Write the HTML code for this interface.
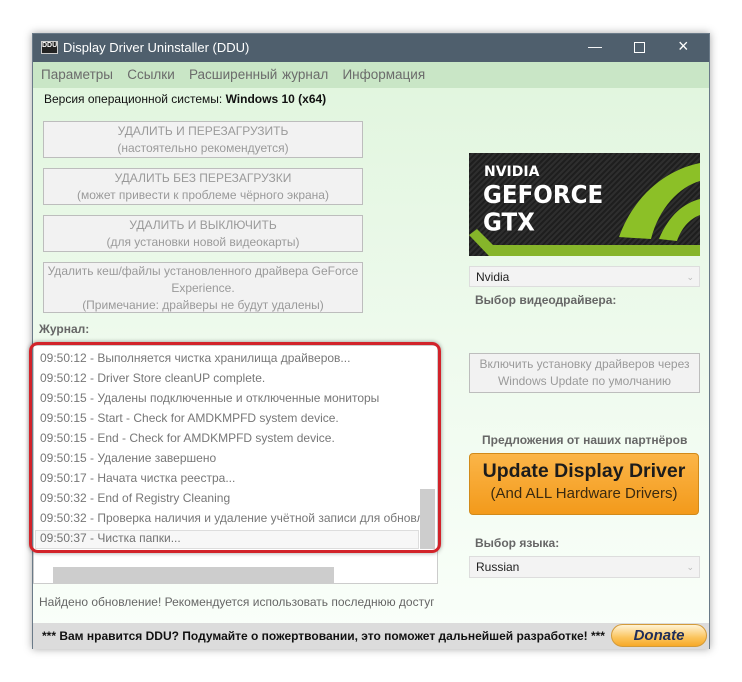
<!DOCTYPE html>
<html><head><meta charset="utf-8"><style>
*{box-sizing:border-box;margin:0;padding:0}
body{width:742px;height:682px;background:#fff;font-family:"Liberation Sans","DejaVu Sans",sans-serif;position:relative;overflow:hidden}
.a{position:absolute}
.win{left:32px;top:33px;width:678px;height:616px;border:1px solid #6a7a88;background:linear-gradient(#dff5dc,#eefaed 50%,#fafffa);box-shadow:0 0 8px rgba(0,0,0,.35)}
.title{left:0;top:0;width:676px;height:28px;background:#4f5f6d;color:#fff;font-size:13px}
.btn{background:#f2f2f2;border:1px solid #bdbdbd;color:#9a9a9a;font-size:12px;text-align:center;line-height:17px}
.log{font-size:12px;color:#777;line-height:20px}
.combo{background:#f3f3f3;border:1px solid #ddd;font-size:12px;color:#222;padding-left:6px;line-height:20px}
.lbl{font-size:12px;font-weight:bold;color:#666}
</style></head><body>
<div class="a win">
 <div class="a title">
  <div class="a" style="left:8px;top:7px;width:17px;height:13px;background:#222;border:1px solid #ccc;font-size:7px;color:#fff;line-height:8px;text-align:center;font-weight:bold">DDU</div>
  <div class="a" style="left:30px;top:6px">Display Driver Uninstaller (DDU)</div>
  <div class="a" style="left:555px;top:4px;font-size:14px">&#8212;</div>
  <div class="a" style="left:601px;top:8px;width:11px;height:11px;border:1px solid #fff"></div>
  <div class="a" style="left:645px;top:2px;font-size:18px">&#215;</div>
 </div>
 <div class="a" style="left:0;top:28px;width:676px;height:26px;background:#c9e6c6;font-size:13.5px;color:#6b6b6b;line-height:26px;padding-left:8px;word-spacing:1px">Параметры&nbsp;&nbsp; Ссылки&nbsp;&nbsp; Расширенный журнал&nbsp;&nbsp; Информация</div>
 <div class="a" style="left:11px;top:58px;font-size:12px;color:#111">Версия операционной системы: <b>Windows 10 (x64)</b></div>
 <div class="a btn" style="left:10px;top:87px;width:320px;height:37px;padding-top:1px">УДАЛИТЬ И ПЕРЕЗАГРУЗИТЬ<br>(настоятельно рекомендуется)</div>
 <div class="a btn" style="left:10px;top:134px;width:320px;height:37px;padding-top:1px">УДАЛИТЬ БЕЗ ПЕРЕЗАГРУЗКИ<br>(может привести к проблеме чёрного экрана)</div>
 <div class="a btn" style="left:10px;top:181px;width:320px;height:37px;padding-top:1px">УДАЛИТЬ И ВЫКЛЮЧИТЬ<br>(для установки новой видеокарты)</div>
 <div class="a btn" style="left:10px;top:228px;width:320px;height:51px;padding-top:0px">Удалить кеш/файлы установленного драйвера GeForce<br>Experience.<br>(Примечание: драйверы не будут удалены)</div>
 <div class="a lbl" style="left:6px;top:288px">Журнал:</div>
 <div class="a" style="left:0;top:311px;width:405px;height:239px;background:#fff;border:1px solid #ccc"></div>
 <div class="a log" style="left:7px;top:314px;width:380px;white-space:nowrap;overflow:hidden">
 09:50:12 - Выполняется чистка хранилища драйверов...<br>09:50:12 - Driver Store cleanUP complete.<br>09:50:15 - Удалены подключенные и отключенные мониторы<br>09:50:15 - Start - Check for AMDKMPFD system device.<br>09:50:15 - End - Check for AMDKMPFD system device.<br>09:50:15 - Удаление завершено<br>09:50:17 - Начата чистка реестра...<br>09:50:32 - End of Registry Cleaning<br>09:50:32 - Проверка наличия и удаление учётной записи для обновл<br>09:50:37 - Чистка папки...</div>
 <div class="a" style="left:2px;top:496px;width:384px;height:19px;border:1px solid #ddd;background:rgba(0,0,0,.03)"></div>
 <div class="a" style="left:387px;top:455px;width:15px;height:60px;background:#cdcdcd"></div>
 <div class="a" style="left:-4px;top:308px;width:412px;height:211px;border:3px solid #d2232a;border-radius:9px;box-shadow:0 0 4px rgba(0,0,0,.4)"></div>
 <div class="a" style="left:20px;top:533px;width:281px;height:17px;background:#cdcdcd"></div>
 <div class="a" style="left:6px;top:561px;font-size:12px;color:#666;width:395px;white-space:nowrap;overflow:hidden">Найдено обновление! Рекомендуется использовать последнюю доступную</div>
 <div class="a" style="left:436px;top:119px;width:231px;height:103px;background:repeating-linear-gradient(135deg,#1e1e1e 0 2px,#2e2e2e 2px 4px);overflow:hidden">
  <svg width="231" height="103" style="position:absolute;left:0;top:0"><path d="M0 82 L20 103 L231 103 L231 92 L24 92 L8 76Z" fill="#86b52a"/><path d="M150 84 C168 35 205 15 231 10 L231 28 C210 34 190 55 182 86Z" fill="#8cc027"/><path d="M190 86 C200 62 215 50 231 46 L231 62 C220 66 212 76 208 88Z" fill="#8cc027"/></svg>
  <div class="a" style="left:15px;top:11px;color:#fff;font-weight:bold;font-size:14px;font-family:'DejaVu Sans',sans-serif">NVIDIA</div>
  <div class="a" style="left:14px;top:29px;color:#fff;font-weight:bold;font-size:23px;line-height:25px;font-family:'DejaVu Sans',sans-serif;transform:scaleY(1.1);transform-origin:0 0">GEFORCE<br>GTX</div>
 </div>
 <div class="a combo" style="left:436px;top:232px;width:231px;height:21px">Nvidia<span style="float:right;color:#bbb;margin-right:5px;font-size:9px">&#8964;</span></div>
 <div class="a lbl" style="left:442px;top:259px">Выбор видеодрайвера:</div>
 <div class="a btn" style="left:436px;top:319px;width:231px;height:40px;padding-top:2px">Включить установку драйверов через<br>Windows Update по умолчанию</div>
 <div class="a lbl" style="left:449px;top:399px">Предложения от наших партнёров</div>
 <div class="a" style="left:436px;top:419px;width:230px;height:62px;border:1px solid #d18a1a;border-radius:4px;background:linear-gradient(#fbb548,#f39a1b);text-align:center">
  <div style="font-size:19.5px;font-weight:bold;color:#1c1c1c;margin-top:6px">Update Display Driver</div>
  <div style="font-size:15px;color:#3a2a10;margin-top:2px">(And ALL Hardware Drivers)</div>
 </div>
 <div class="a lbl" style="left:442px;top:502px">Выбор языка:</div>
 <div class="a combo" style="left:436px;top:522px;width:231px;height:22px">Russian<span style="float:right;color:#bbb;margin-right:5px;font-size:9px">&#8964;</span></div>
 <div class="a" style="left:0;top:589px;width:676px;height:26px;background:#dcdcdc;font-size:12px;font-weight:bold;color:#111;line-height:26px;padding-left:9px">*** Вам нравится DDU? Подумайте о пожертвовании, это поможет дальнейшей разработке! ***</div>
 <div class="a" style="left:578px;top:590px;width:96px;height:23px;border:1px solid #d39b3a;border-radius:12px;background:linear-gradient(#fff3d6,#fbc45c 60%,#f7a928);text-align:center;font-style:italic;font-weight:bold;font-size:15px;color:#1e2d5a;line-height:21px">Donate</div>
</div>
</body></html>
